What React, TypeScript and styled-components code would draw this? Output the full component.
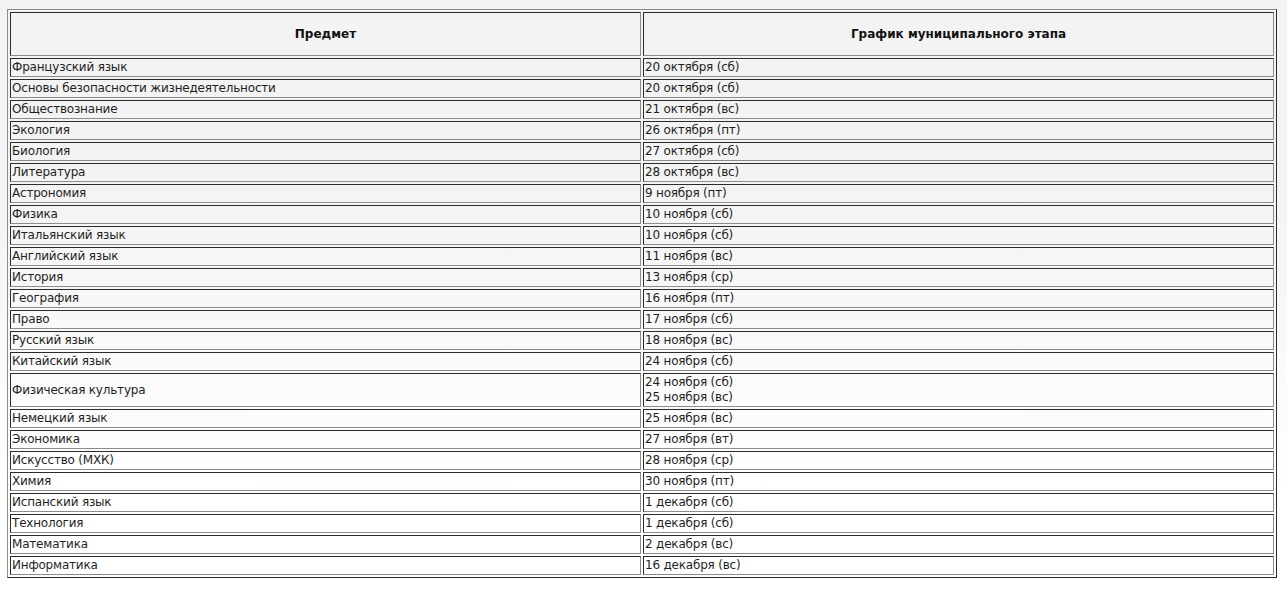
import React from 'react';
import styled, { createGlobalStyle } from 'styled-components';

interface RowI {
  subject: string
  dates: string[]
}

const rows: RowI[] = [
  { subject: 'Французский язык', dates: ['20 октября (сб)'] },
  { subject: 'Основы безопасности жизнедеятельности', dates: ['20 октября (сб)'] },
  { subject: 'Обществознание', dates: ['21 октября (вс)'] },
  { subject: 'Экология', dates: ['26 октября (пт)'] },
  { subject: 'Биология', dates: ['27 октября (сб)'] },
  { subject: 'Литература', dates: ['28 октября (вс)'] },
  { subject: 'Астрономия', dates: ['9 ноября (пт)'] },
  { subject: 'Физика', dates: ['10 ноября (сб)'] },
  { subject: 'Итальянский язык', dates: ['10 ноября (сб)'] },
  { subject: 'Английский язык', dates: ['11 ноября (вс)'] },
  { subject: 'История', dates: ['13 ноября (ср)'] },
  { subject: 'География', dates: ['16 ноября (пт)'] },
  { subject: 'Право', dates: ['17 ноября (сб)'] },
  { subject: 'Русский язык', dates: ['18 ноября (вс)'] },
  { subject: 'Китайский язык', dates: ['24 ноября (сб)'] },
  { subject: 'Физическая культура', dates: ['24 ноября (сб)', '25 ноября (вс)'] },
  { subject: 'Немецкий язык', dates: ['25 ноября (вс)'] },
  { subject: 'Экономика', dates: ['27 ноября (вт)'] },
  { subject: 'Искусство (МХК)', dates: ['28 ноября (ср)'] },
  { subject: 'Химия', dates: ['30 ноября (пт)'] },
  { subject: 'Испанский язык', dates: ['1 декабря (сб)'] },
  { subject: 'Технология', dates: ['1 декабря (сб)'] },
  { subject: 'Математика', dates: ['2 декабря (вс)'] },
  { subject: 'Информатика', dates: ['16 декабря (вс)'] },
]

const GlobalStyle = createGlobalStyle`
  html, body {
    margin: 0;
    padding: 0;
  }
  body {
    padding: 9px 0 0 7px;
    min-height: 581px;
    background: linear-gradient(to bottom, #f3f3f3 0%, #f3f3f3 30%, #ffffff 85%);
    font-family: "DejaVu Sans", Verdana, sans-serif;
  }
`

const App: React.FC = () => {
  return (
    <>
      <GlobalStyle />
      <Schedule>
        <thead>
          <tr>
            <HeadCell>Предмет</HeadCell>
            <HeadCell>График муниципального этапа</HeadCell>
          </tr>
        </thead>
        <tbody>
          {rows.map(row => (
            <tr key={row.subject}>
              <Cell>{row.subject}</Cell>
              <Cell>
                {row.dates.map((d, i) => (
                  <React.Fragment key={d}>
                    {i > 0 && <br />}
                    {d}
                  </React.Fragment>
                ))}
              </Cell>
            </tr>
          ))}
        </tbody>
      </Schedule>
    </>
  )
}

export default App

const Schedule = styled.table`
  width: 1270px;
  table-layout: fixed;
  border-collapse: separate;
  border-spacing: 2px;
  border: 1px solid;
  border-color: #8c8c8c #2b2b2b #2b2b2b #8c8c8c;
  font-size: 12px;
  line-height: 15px;
  letter-spacing: -0.2px;
  color: #1f1f1f;
`

const HeadCell = styled.th`
  width: 50%;
  padding: 14px 1px 13px;
  border: 1px solid;
  border-color: #2b2b2b #8c8c8c #8c8c8c #2b2b2b;
  font-weight: bold;
  text-align: center;
  letter-spacing: 0;
  color: #111;
`

const Cell = styled.td`
  width: 50%;
  padding: 1px;
  border: 1px solid;
  border-color: #2b2b2b #8c8c8c #8c8c8c #2b2b2b;
  text-align: left;
  vertical-align: middle;
`
